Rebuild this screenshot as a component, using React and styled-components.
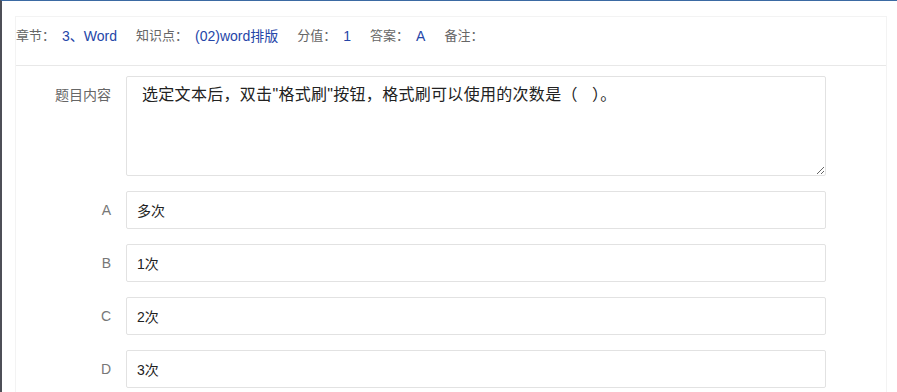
import styled, { createGlobalStyle } from 'styled-components';

const GlobalStyle = createGlobalStyle`
  html, body {
    margin: 0;
    padding: 0;
    background: #fff;
    font-family: "Liberation Sans", Arial, "Noto Sans CJK SC", sans-serif;
  }
`;

const meta = [
  { label: '章节：', value: '3、Word' },
  { label: '知识点：', value: '(02)word排版' },
  { label: '分值：', value: '1' },
  { label: '答案：', value: 'A' },
  { label: '备注：', value: '' },
];

const options = [
  { key: 'A', text: '多次' },
  { key: 'B', text: '1次' },
  { key: 'C', text: '2次' },
  { key: 'D', text: '3次' },
];

export default function App() {
  return (
    <Frame>
      <GlobalStyle />
      <Panel>
        <MetaBar>
          {meta.map((m) => (
            <MetaItem key={m.label}>
              <MetaLabel>{m.label}</MetaLabel>
              {m.value && <MetaValue>{m.value}</MetaValue>}
            </MetaItem>
          ))}
        </MetaBar>
        <Form>
          <Row>
            <Label>题目内容</Label>
            <Content defaultValue={'选定文本后，双击"格式刷"按钮，格式刷可以使用的次数是（   ）。'} />
          </Row>
          {options.map((o) => (
            <Row key={o.key} $center>
              <Label $option>{o.key}</Label>
              <OptionInput defaultValue={o.text} />
            </Row>
          ))}
        </Form>
      </Panel>
    </Frame>
  );
}

const Frame = styled.div`
  min-height: 392px;
  box-sizing: border-box;
  border-top: 1px solid #3b6aa3;
  border-left: 2px solid #4d4f57;
  padding: 15px 10px 0 13px;
`;

const Panel = styled.div`
  border: 1px solid #f3f3f3;
  border-bottom: none;
  min-height: 380px;
`;

const MetaBar = styled.div`
  display: flex;
  align-items: flex-start;
  gap: 19px;
  height: 39px;
  padding-top: 9px;
  border-bottom: 1px solid #e8e8e8;
  line-height: 20px;
`;

const MetaItem = styled.div`
  display: flex;
  gap: 7px;
`;

const MetaLabel = styled.span`
  font-size: 13px;
  color: #666;
`;

const MetaValue = styled.span`
  font-size: 14px;
  color: #2546a8;
`;

const Form = styled.div`
  display: flex;
  flex-direction: column;
  gap: 15px;
  padding-top: 10px;
`;

const Row = styled.div`
  display: flex;
  align-items: ${(p) => (p.$center ? 'center' : 'flex-start')};
`;

const Label = styled.div`
  width: 95px;
  padding-right: 15px;
  text-align: right;
  font-size: 14px;
  color: ${(p) => (p.$option ? '#777' : '#666')};
  padding-top: ${(p) => (p.$option ? '0' : '10px')};
  line-height: 18px;
`;

const Content = styled.textarea`
  width: 700px;
  height: 100px;
  box-sizing: border-box;
  border: 1px solid #e2e2e2;
  border-radius: 2px;
  padding: 7px 15px;
  font-family: "Liberation Sans", Arial, "Noto Sans CJK SC", sans-serif;
  font-size: 16px;
  letter-spacing: 0.3px;
  line-height: 22px;
  color: #222;
  resize: vertical;
  outline: none;
`;

const OptionInput = styled.input`
  width: 700px;
  height: 38px;
  box-sizing: border-box;
  border: 1px solid #e2e2e2;
  border-radius: 2px;
  padding: 0 10px;
  font-family: "Liberation Sans", Arial, "Noto Sans CJK SC", sans-serif;
  font-size: 14px;
  color: #222;
  outline: none;
`;
